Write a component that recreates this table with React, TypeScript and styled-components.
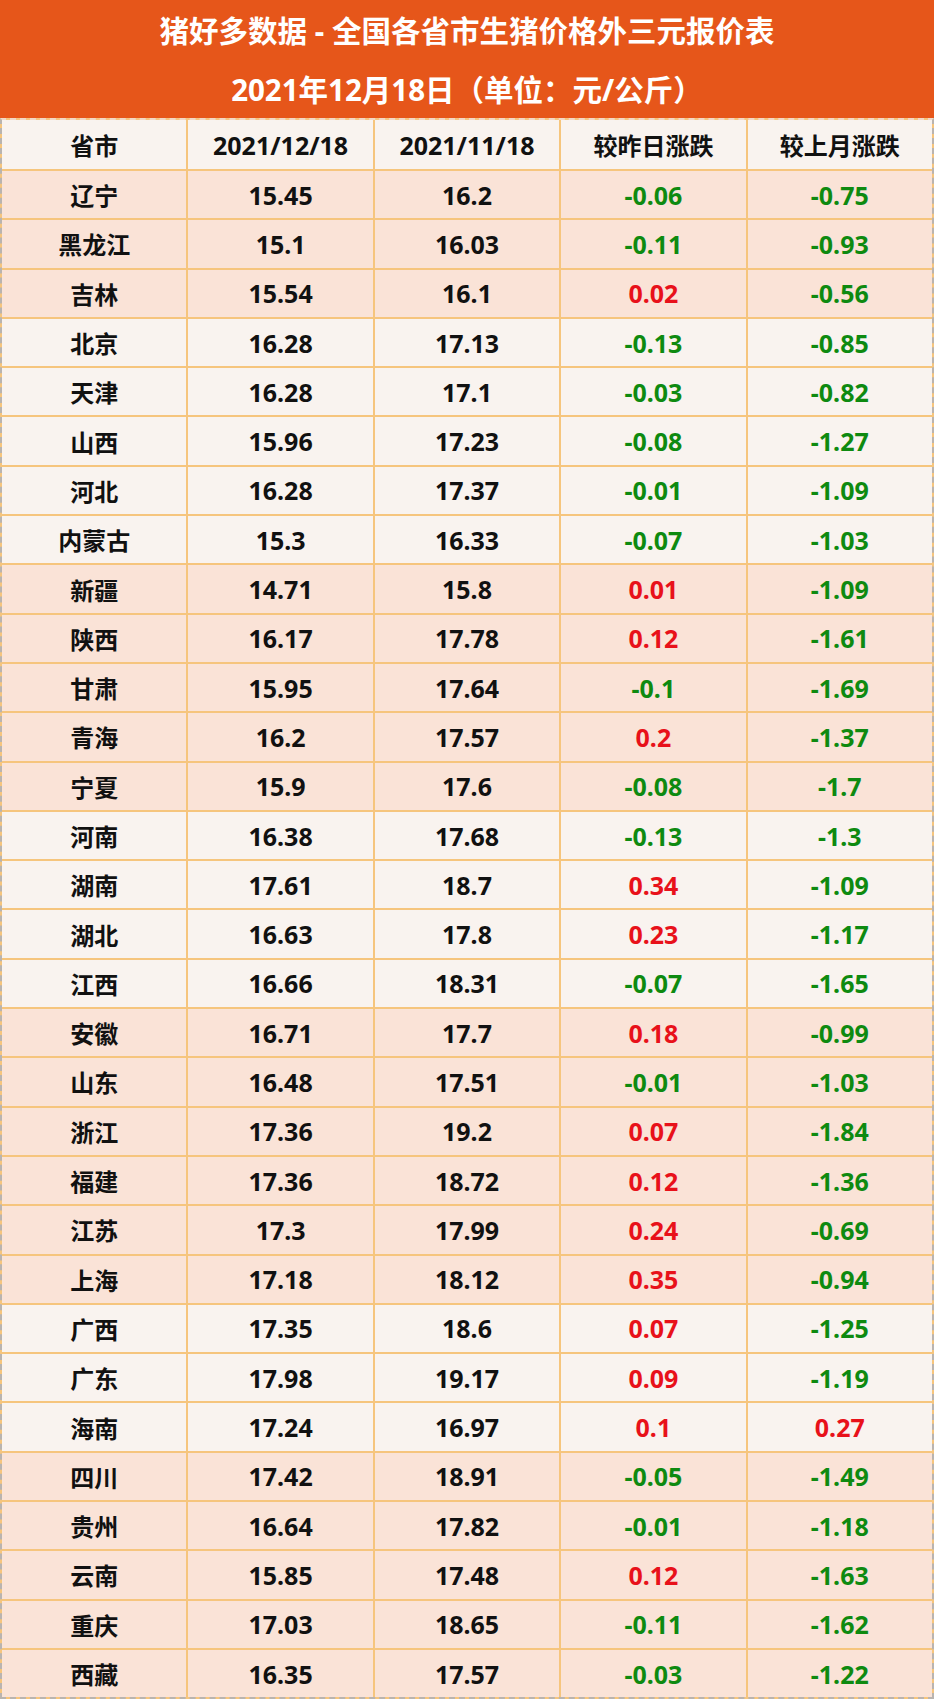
import React from "react";
import styled, { createGlobalStyle } from "styled-components";

type Shade = "pink" | "light" | "head";

type Row = {
  name: string;
  today: string;
  lastMonth: string;
  dayChange: string;
  monthChange: string;
  shade: Shade;
};

const GlobalStyle = createGlobalStyle`
  html, body {
    margin: 0;
    padding: 0;
    background: #ffffff;
  }
  body {
    font-family: "Noto Sans", "Noto Sans CJK SC", sans-serif;
  }
`;

const Page = styled.div`
  width: 934px;
  display: flex;
  flex-direction: column;
`;

const Banner = styled.header`
  height: 118px;
  background: #e6561a;
  color: #ffffff;
  display: flex;
  flex-direction: column;
  align-items: center;
  font-weight: 700;
`;

const BannerLine = styled.div<{ $height: number }>`
  height: ${({ $height }) => $height}px;
  line-height: ${({ $height }) => $height}px;
  font-size: 29.5px;
  white-space: nowrap;
`;

const Table = styled.div`
  width: 930px;
  display: grid;
  grid-template-columns: repeat(5, 1fr);
  grid-template-rows: 49px repeat(31, 47.3px);
  gap: 2px;
  background: #f6c57d;
  border: 2px dashed #b9b4b0;
  border-top: 2px dashed #f1d8c8;
`;

const Cell = styled.div<{ $shade: Shade; $tone?: "up" | "down"; $numeric?: boolean }>`
  display: flex;
  align-items: center;
  justify-content: center;
  background: ${({ $shade }) => ($shade === "pink" ? "#fae3d7" : "#f9f3ef")};
  color: ${({ $tone }) =>
    $tone === "up" ? "#e8111a" : $tone === "down" ? "#0e8a10" : "#111111"};
  font-size: ${({ $numeric }) => ($numeric ? "25px" : "24px")};
  font-weight: 700;
  white-space: nowrap;
`;

const rows: Row[] = [
  { name: "辽宁", today: "15.45", lastMonth: "16.2", dayChange: "-0.06", monthChange: "-0.75", shade: "pink" },
  { name: "黑龙江", today: "15.1", lastMonth: "16.03", dayChange: "-0.11", monthChange: "-0.93", shade: "pink" },
  { name: "吉林", today: "15.54", lastMonth: "16.1", dayChange: "0.02", monthChange: "-0.56", shade: "pink" },
  { name: "北京", today: "16.28", lastMonth: "17.13", dayChange: "-0.13", monthChange: "-0.85", shade: "light" },
  { name: "天津", today: "16.28", lastMonth: "17.1", dayChange: "-0.03", monthChange: "-0.82", shade: "light" },
  { name: "山西", today: "15.96", lastMonth: "17.23", dayChange: "-0.08", monthChange: "-1.27", shade: "light" },
  { name: "河北", today: "16.28", lastMonth: "17.37", dayChange: "-0.01", monthChange: "-1.09", shade: "light" },
  { name: "内蒙古", today: "15.3", lastMonth: "16.33", dayChange: "-0.07", monthChange: "-1.03", shade: "light" },
  { name: "新疆", today: "14.71", lastMonth: "15.8", dayChange: "0.01", monthChange: "-1.09", shade: "pink" },
  { name: "陕西", today: "16.17", lastMonth: "17.78", dayChange: "0.12", monthChange: "-1.61", shade: "pink" },
  { name: "甘肃", today: "15.95", lastMonth: "17.64", dayChange: "-0.1", monthChange: "-1.69", shade: "pink" },
  { name: "青海", today: "16.2", lastMonth: "17.57", dayChange: "0.2", monthChange: "-1.37", shade: "pink" },
  { name: "宁夏", today: "15.9", lastMonth: "17.6", dayChange: "-0.08", monthChange: "-1.7", shade: "pink" },
  { name: "河南", today: "16.38", lastMonth: "17.68", dayChange: "-0.13", monthChange: "-1.3", shade: "light" },
  { name: "湖南", today: "17.61", lastMonth: "18.7", dayChange: "0.34", monthChange: "-1.09", shade: "light" },
  { name: "湖北", today: "16.63", lastMonth: "17.8", dayChange: "0.23", monthChange: "-1.17", shade: "light" },
  { name: "江西", today: "16.66", lastMonth: "18.31", dayChange: "-0.07", monthChange: "-1.65", shade: "light" },
  { name: "安徽", today: "16.71", lastMonth: "17.7", dayChange: "0.18", monthChange: "-0.99", shade: "pink" },
  { name: "山东", today: "16.48", lastMonth: "17.51", dayChange: "-0.01", monthChange: "-1.03", shade: "pink" },
  { name: "浙江", today: "17.36", lastMonth: "19.2", dayChange: "0.07", monthChange: "-1.84", shade: "pink" },
  { name: "福建", today: "17.36", lastMonth: "18.72", dayChange: "0.12", monthChange: "-1.36", shade: "pink" },
  { name: "江苏", today: "17.3", lastMonth: "17.99", dayChange: "0.24", monthChange: "-0.69", shade: "pink" },
  { name: "上海", today: "17.18", lastMonth: "18.12", dayChange: "0.35", monthChange: "-0.94", shade: "pink" },
  { name: "广西", today: "17.35", lastMonth: "18.6", dayChange: "0.07", monthChange: "-1.25", shade: "light" },
  { name: "广东", today: "17.98", lastMonth: "19.17", dayChange: "0.09", monthChange: "-1.19", shade: "light" },
  { name: "海南", today: "17.24", lastMonth: "16.97", dayChange: "0.1", monthChange: "0.27", shade: "light" },
  { name: "四川", today: "17.42", lastMonth: "18.91", dayChange: "-0.05", monthChange: "-1.49", shade: "pink" },
  { name: "贵州", today: "16.64", lastMonth: "17.82", dayChange: "-0.01", monthChange: "-1.18", shade: "pink" },
  { name: "云南", today: "15.85", lastMonth: "17.48", dayChange: "0.12", monthChange: "-1.63", shade: "pink" },
  { name: "重庆", today: "17.03", lastMonth: "18.65", dayChange: "-0.11", monthChange: "-1.62", shade: "pink" },
  { name: "西藏", today: "16.35", lastMonth: "17.57", dayChange: "-0.03", monthChange: "-1.22", shade: "pink" },
];

const headers = ["省市", "2021/12/18", "2021/11/18", "较昨日涨跌", "较上月涨跌"];

const toneOf = (v: string) => (v.startsWith("-") ? "down" : "up");

export default function App() {
  return (
    <Page>
      <GlobalStyle />
      <Banner>
        <BannerLine $height={62}>猪好多数据 - 全国各省市生猪价格外三元报价表</BannerLine>
        <BannerLine $height={56}>2021年12月18日（单位：元/公斤）</BannerLine>
      </Banner>
      <Table>
        {headers.map((h, i) => (
          <Cell key={h} $shade="head" $numeric={i === 1 || i === 2}>
            {h}
          </Cell>
        ))}
        {rows.map((r) => (
          <React.Fragment key={r.name}>
            <Cell $shade={r.shade}>{r.name}</Cell>
            <Cell $shade={r.shade} $numeric>
              {r.today}
            </Cell>
            <Cell $shade={r.shade} $numeric>
              {r.lastMonth}
            </Cell>
            <Cell $shade={r.shade} $numeric $tone={toneOf(r.dayChange)}>
              {r.dayChange}
            </Cell>
            <Cell $shade={r.shade} $numeric $tone={toneOf(r.monthChange)}>
              {r.monthChange}
            </Cell>
          </React.Fragment>
        ))}
      </Table>
    </Page>
  );
}
